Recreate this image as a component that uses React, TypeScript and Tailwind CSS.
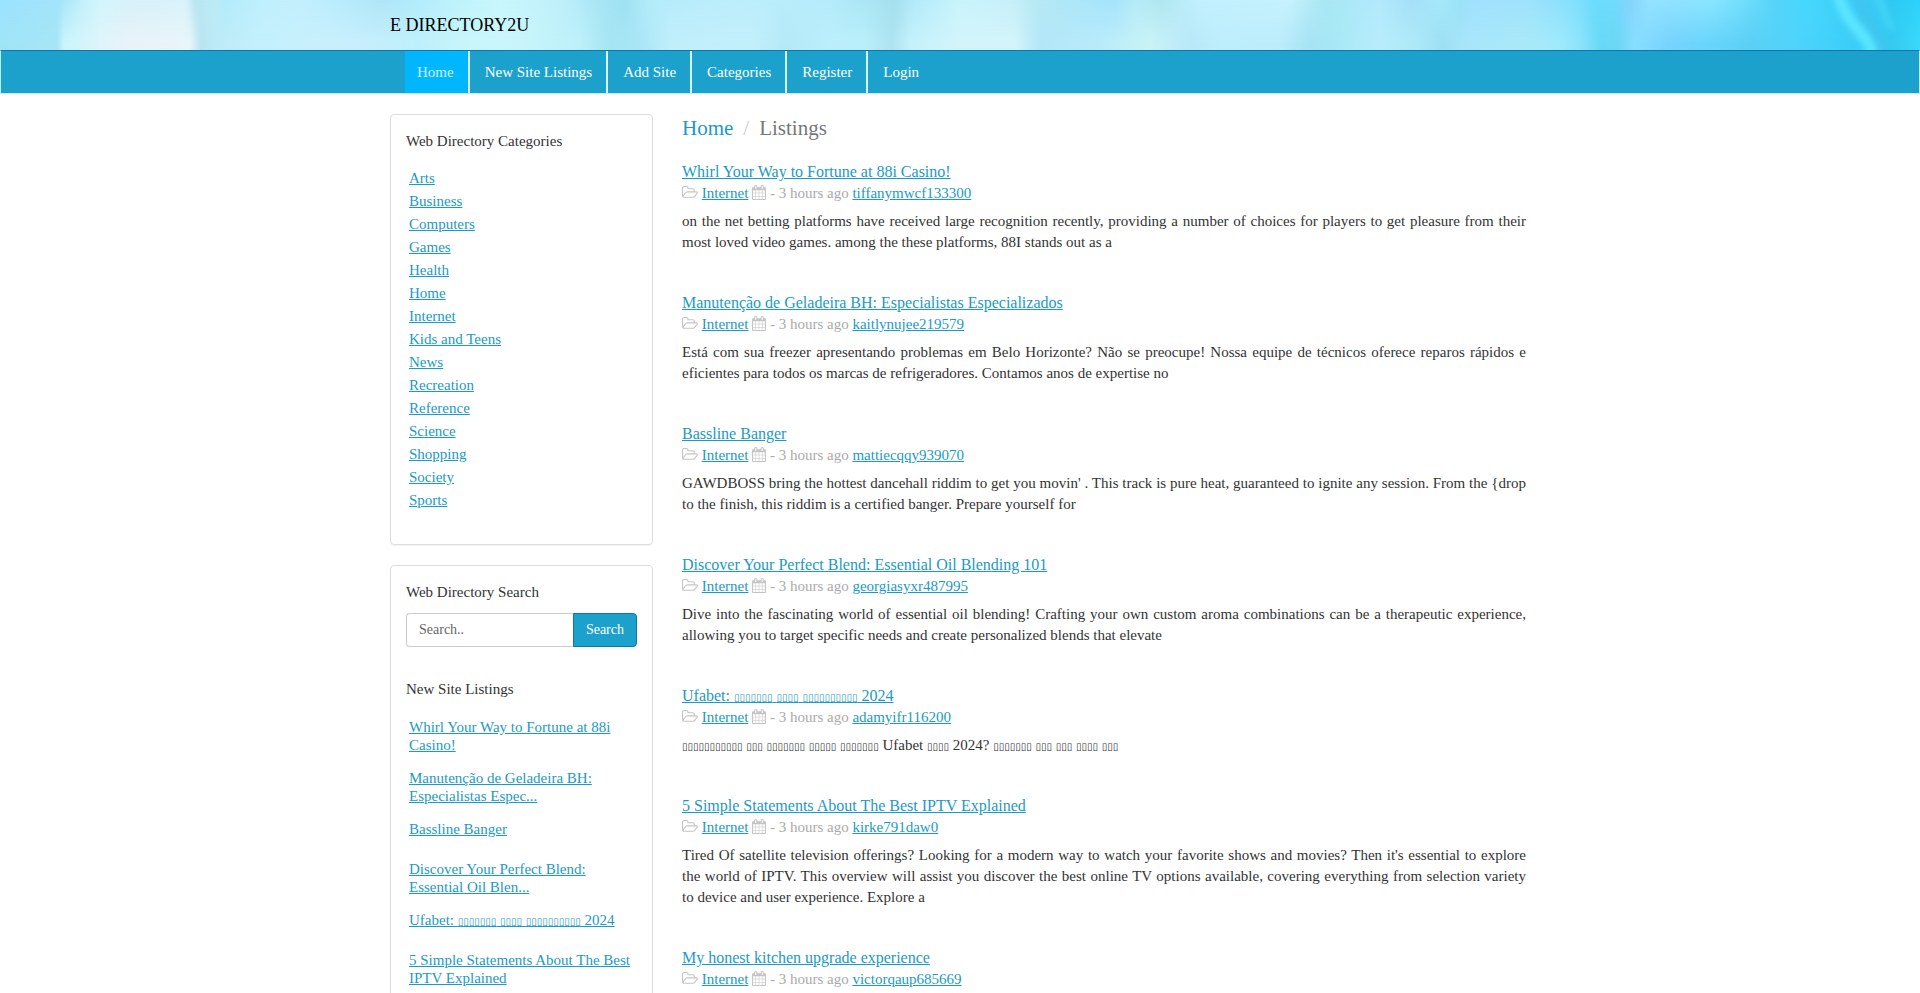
import type { ReactNode } from 'react'

interface Listing {
  title: string
  user: string
  body: string
}

const NAV = ['New Site Listings', 'Add Site', 'Categories', 'Register', 'Login']

const CATEGORIES = [
  'Arts',
  'Business',
  'Computers',
  'Games',
  'Health',
  'Home',
  'Internet',
  'Kids and Teens',
  'News',
  'Recreation',
  'Reference',
  'Science',
  'Shopping',
  'Society',
  'Sports',
]

const UFABET_TITLE = 'Ufabet: ▯▯▯▯▯▯▯ ▯▯▯▯ ▯▯▯▯▯▯▯▯▯▯ 2024'

const NEW_SITES = [
  'Whirl Your Way to Fortune at 88i Casino!',
  'Manutenção de Geladeira BH: Especialistas Espec...',
  'Bassline Banger',
  'Discover Your Perfect Blend: Essential Oil Blen...',
  UFABET_TITLE,
  '5 Simple Statements About The Best IPTV Explained',
]

const LISTINGS: Listing[] = [
  {
    title: 'Whirl Your Way to Fortune at 88i Casino!',
    user: 'tiffanymwcf133300',
    body: 'on the net betting platforms have received large recognition recently, providing a number of choices for players to get pleasure from their most loved video games. among the these platforms, 88I stands out as a',
  },
  {
    title: 'Manutenção de Geladeira BH: Especialistas Especializados',
    user: 'kaitlynujee219579',
    body: 'Está com sua freezer apresentando problemas em Belo Horizonte? Não se preocupe! Nossa equipe de técnicos oferece reparos rápidos e eficientes para todos os marcas de refrigeradores. Contamos anos de expertise no',
  },
  {
    title: 'Bassline Banger',
    user: 'mattiecqqy939070',
    body: "GAWDBOSS bring the hottest dancehall riddim to get you movin' . This track is pure heat, guaranteed to ignite any session. From the {drop to the finish, this riddim is a certified banger. Prepare yourself for",
  },
  {
    title: 'Discover Your Perfect Blend: Essential Oil Blending 101',
    user: 'georgiasyxr487995',
    body: 'Dive into the fascinating world of essential oil blending! Crafting your own custom aroma combinations can be a therapeutic experience, allowing you to target specific needs and create personalized blends that elevate',
  },
  {
    title: UFABET_TITLE,
    user: 'adamyifr116200',
    body: '▯▯▯▯▯▯▯▯▯▯▯ ▯▯▯ ▯▯▯▯▯▯▯ ▯▯▯▯▯ ▯▯▯▯▯▯▯ Ufabet ▯▯▯▯ 2024? ▯▯▯▯▯▯▯ ▯▯▯ ▯▯▯ ▯▯▯▯ ▯▯▯',
  },
  {
    title: '5 Simple Statements About The Best IPTV Explained',
    user: 'kirke791daw0',
    body: "Tired Of satellite television offerings? Looking for a modern way to watch your favorite shows and movies? Then it's essential to explore the world of IPTV. This overview will assist you discover the best online TV options available, covering everything from selection variety to device and user experience. Explore a",
  },
  {
    title: 'My honest kitchen upgrade experience',
    user: 'victorqaup685669',
    body: '',
  },
]

function FolderIcon() {
  return (
    <svg viewBox="0 0 1920 1792" className="inline h-[15px] w-4 align-[-3px] fill-[#c4c4c4]" aria-hidden="true">
      <path d="M1781 803q0-35-53-35h-1088q-40 0-85.500 21.500t-71.500 52.500l-294 363q-18 24-18 40 0 35 53 35h1088q40 0 86-22t71-53l294-363q18-22 18-39zm-1141-163h768v-160q0-40-28-68t-68-28h-576q-40 0-68-28t-28-68v-64q0-40-28-68t-68-28h-320q-40 0-68 28t-28 68v853l256-315q44-53 116-87.500t140-34.500zm1269 163q0 62-46 120l-295 363q-43 53-116 87.500t-140 34.500h-1088q-92 0-158-66t-66-158v-960q0-92 66-158t158-66h320q92 0 158 66t66 158v32h544q92 0 158 66t66 158v160h192q54 0 99 24.500t67 70.500q15 32 15 68z" />
    </svg>
  )
}

function CalendarIcon() {
  return (
    <svg viewBox="64 0 1664 1792" className="inline h-[15px] w-[14px] align-[-2px] fill-[#c4c4c4]" aria-hidden="true">
      <path d="M192 1664h288v-288h-288v288zm352 0h320v-288h-320v288zm-352-352h288v-320h-288v320zm352 0h320v-320h-320v320zm-352-384h288v-288h-288v288zm736 736h320v-288h-320v288zm-384-736h320v-288h-320v288zm768 736h288v-288h-288v288zm-384-352h320v-320h-320v320zm-352-864v-288q0-13-9.500-22.500t-22.500-9.500h-64q-13 0-22.500 9.500t-9.500 22.500v288q0 13 9.500 22.500t22.500 9.500h64q13 0 22.500-9.500t9.500-22.500zm736 864h288v-320h-288v320zm-384-384h320v-288h-320v288zm384 0h288v-288h-288v288zm32-480v-288q0-13-9.500-22.500t-22.500-9.500h-64q-13 0-22.500 9.500t-9.500 22.500v288q0 13 9.500 22.500t22.500 9.500h64q13 0 22.500-9.500t9.500-22.500zm384-64v1280q0 52-38 90t-90 38h-1408q-52 0-90-38t-38-90v-1280q0-52 38-90t90-38h128v-96q0-66 47-113t113-47h64q66 0 113 47t47 113v96h384v-96q0-66 47-113t113-47h64q66 0 113 47t47 113v96h128q52 0 90 38t38 90z" />
    </svg>
  )
}

// x position and colour of the soft vertical bands along the header's edges
const TOP_BANDS: [number, string][] = [
  [0, '#9be3ff'], [60, '#a4e4fb'], [80, '#c0f0fb'], [100, '#d3f7fc'], [130, '#d8f1fa'],
  [185, '#daf3fb'], [195, '#b9e6f2'], [215, '#bdebf5'], [225, '#b3ecfb'], [260, '#bff0fd'],
  [300, '#c4effc'], [340, '#b8edfd'], [380, '#b0e6f8'], [400, '#b0e9fb'], [450, '#bdf2fc'],
  [500, '#c9f8fd'], [560, '#c0f0fb'], [600, '#a8e6f5'], [625, '#9fe2f1'], [650, '#b5ecfb'],
  [740, '#bdeefb'], [830, '#b5ecfc'], [880, '#a8e3f3'], [895, '#a5dfee'], [915, '#b3ebfa'],
  [960, '#c9f5fc'], [1010, '#c8f0fa'], [1035, '#b8eaf3'], [1060, '#b0e8f8'], [1115, '#a5e4fd'],
  [1135, '#b6ebf8'], [1160, '#b0e8f0'], [1200, '#c2f0fe'], [1290, '#c6f2fe'], [1325, '#a8e8f3'],
  [1380, '#b3e9fd'], [1411, '#a5e0f7'], [1442, '#a5e8fc'], [1461, '#9be2f7'], [1476, '#a2e2ff'],
  [1531, '#9ee2fc'], [1576, '#83e0fc'], [1593, '#6ddcfc'], [1614, '#6edcfd'], [1631, '#85d4fc'],
  [1649, '#94e3ff'], [1714, '#8ae5ff'], [1741, '#74dffc'], [1776, '#55d4fa'], [1810, '#46d8fd'],
  [1834, '#40d2fa'], [1862, '#40c8f5'], [1890, '#2fcaf2'], [1920, '#2bd3fb'],
]

const BOTTOM_BANDS: [number, string][] = [
  [0, '#a0e4f8'], [57, '#a5e5f5'], [64, '#c9f5fc'], [100, '#dff3fa'], [130, '#e8f2f9'],
  [190, '#e8f5fa'], [201, '#b8e4f0'], [215, '#bceaf6'], [260, '#c3f0fc'], [330, '#c9effc'],
  [380, '#c5eefc'], [420, '#bdf0fb'], [470, '#c9f6fb'], [520, '#c8f5fb'], [580, '#bcf0f9'],
  [610, '#a5e4f3'], [640, '#a8e6f6'], [670, '#c0eefb'], [750, '#c3effb'], [785, '#b5e9f7'],
  [830, '#bbeefb'], [865, '#b8eff9'], [892, '#aee3f0'], [910, '#c3f1fb'], [960, '#d3f4fb'],
  [1015, '#d3f4fa'], [1040, '#b3e6f7'], [1100, '#b8ebfa'], [1150, '#c8f3f6'], [1190, '#b9e8f8'],
  [1220, '#bdeefb'], [1280, '#bcecfa'], [1310, '#a6e3f3'], [1340, '#a8e9f6'], [1380, '#b8ecfc'],
  [1414, '#aee9f8'], [1442, '#9de0f3'], [1466, '#a8e5fb'], [1528, '#a8e9f8'], [1559, '#9feafc'],
  [1580, '#8be3fb'], [1600, '#68d9f8'], [1618, '#6ed6f5'], [1635, '#88deff'], [1669, '#77d3fc'],
  [1707, '#6ad5fc'], [1752, '#5bcff5'], [1793, '#50d4fb'], [1838, '#3fd0fa'], [1890, '#35c9f0'],
  [1920, '#3ad8fa'],
]

function HeaderArt() {
  return (
    <svg
      viewBox="0 0 1920 50"
      preserveAspectRatio="none"
      className="absolute inset-0 h-full w-full"
      aria-hidden="true"
    >
      <defs>
        <linearGradient id="top">
          {TOP_BANDS.map(([x, color]) => (
            <stop key={x} offset={x / 1920} stopColor={color} />
          ))}
        </linearGradient>
        <linearGradient id="bottom">
          {BOTTOM_BANDS.map(([x, color]) => (
            <stop key={x} offset={x / 1920} stopColor={color} />
          ))}
        </linearGradient>
        <linearGradient id="fade" x1="0" y1="0" x2="0" y2="1">
          <stop offset="0" stopColor="#000" />
          <stop offset="0.85" stopColor="#fff" />
        </linearGradient>
        <mask id="lower">
          <rect width="1920" height="50" fill="url(#fade)" />
        </mask>
        <filter id="soft" x="-50%" y="-50%" width="200%" height="200%">
          <feGaussianBlur stdDeviation="3" />
        </filter>
      </defs>
      <rect width="1920" height="50" fill="url(#top)" />
      <rect width="1920" height="50" fill="url(#bottom)" mask="url(#lower)" />
      <g filter="url(#soft)" fill="none">
        <path d="M1856 -6 Q1866 14 1888 56" stroke="#3cc6f0" strokeWidth="10" />
        <path d="M1838 -6 Q1842 12 1858 30 T1872 58" stroke="#5ce6ff" strokeWidth="11" />
        <path d="M1876 -6 Q1884 12 1892 30" stroke="#46d5f8" strokeWidth="6" />
      </g>
    </svg>
  )
}

// the empty boxes are narrower than the text around them
function Text({ children }: { children: string }) {
  return children.split(/(▯+)/).map((part, i) =>
    part.startsWith('▯') ? (
      <span key={i} className="font-['DejaVu_Sans',sans-serif] text-[10px] leading-none">
        {part}
      </span>
    ) : (
      part
    ),
  )
}

function Link({ children }: { children: ReactNode }) {
  return (
    <a href="#" className="text-[#1b9ac4] underline">
      {children}
    </a>
  )
}

function Panel({ children }: { children: ReactNode }) {
  return (
    <div className="mb-5 rounded border border-[#ddd] px-[15px] pt-[15px] pb-8 shadow-[0_1px_1px_rgba(0,0,0,0.05)]">
      {children}
    </div>
  )
}

function ListingItem({ item }: { item: Listing }) {
  return (
    <article className="mb-[39px]">
      <h2 className="text-base leading-[22px]">
        <Link>
          <Text>{item.title}</Text>
        </Link>
      </h2>
      <div className="leading-[21px] text-[#aaa]">
        <FolderIcon /> <Link>Internet</Link> <CalendarIcon /> - 3 hours ago <Link>{item.user}</Link>
      </div>
      <p className="mt-[7px] text-justify leading-[21px]">
        <Text>{item.body}</Text>
      </p>
    </article>
  )
}

export default function App() {
  return (
    <div className="h-screen overflow-hidden bg-white font-['Liberation_Serif',serif] text-[15px] text-[#333]">
      <header className="relative">
        <HeaderArt />
        <div className="relative mx-auto flex h-[50px] max-w-[1140px] items-center">
          <a href="#" className="text-lg text-black">
            E DIRECTORY2U
          </a>
        </div>
      </header>

      <nav className="border border-[#bdf0ff] border-t-[#0e76a8] bg-[#1ba1cc]">
        <ul className="mx-auto flex max-w-[1140px] pl-[15px] leading-[42px]">
          <li className="border-r-2 border-[#d5f5ff] bg-[#00b7ff] pr-[14px] pl-3">
            <a href="#" className="text-[#d0f3ff]">Home</a>
          </li>
          {NAV.map(item => (
            <li key={item} className="border-r-2 border-[#d5f5ff] pr-[14px] pl-[15px] last:border-r-0">
              <a href="#" className="text-white">{item}</a>
            </li>
          ))}
        </ul>
      </nav>

      <div className="mx-auto flex max-w-[1140px] gap-[29px] pt-5">
        <aside className="w-[263px] shrink-0">
          <Panel>
            <h4 className="leading-[22px]">Web Directory Categories</h4>
            <ul className="mt-[15px] pl-[3px] leading-[23px]">
              {CATEGORIES.map(name => (
                <li key={name}>
                  <Link>{name}</Link>
                </li>
              ))}
            </ul>
          </Panel>

          <Panel>
            <h4 className="leading-[22px]">Web Directory Search</h4>
            <form className="mt-[10px] flex text-sm" onSubmit={e => e.preventDefault()}>
              <input
                type="text"
                aria-label="Search"
                placeholder="Search.."
                className="h-[34px] min-w-0 flex-1 rounded-l border border-r-0 border-[#ccc] px-3 placeholder:text-[#666]"
              />
              <button
                type="submit"
                className="rounded-r border border-[#0e76a8] bg-[#1ba1cc] px-3 text-white"
              >
                Search
              </button>
            </form>
            <h4 className="mt-[31px] leading-[22px]">New Site Listings</h4>
            <ul className="mt-[18px] pl-[3px] leading-[18px]">
              {NEW_SITES.map(name => (
                <li key={name} className="mb-[15px] min-h-[25px]">
                  <Link>
                    <Text>{name}</Text>
                  </Link>
                </li>
              ))}
            </ul>
          </Panel>
        </aside>

        <main className="min-w-0 flex-1 pr-1">
          <ol className="mb-[19px] flex text-[21px] leading-[28px]">
            <li>
              <a href="#" className="text-[#1b9ac4]">Home</a>
            </li>
            <li className="px-[10px] text-[#ccc]">/</li>
            <li className="text-[#777]">Listings</li>
          </ol>
          {LISTINGS.map(item => (
            <ListingItem key={item.title} item={item} />
          ))}
        </main>
      </div>
    </div>
  )
}
